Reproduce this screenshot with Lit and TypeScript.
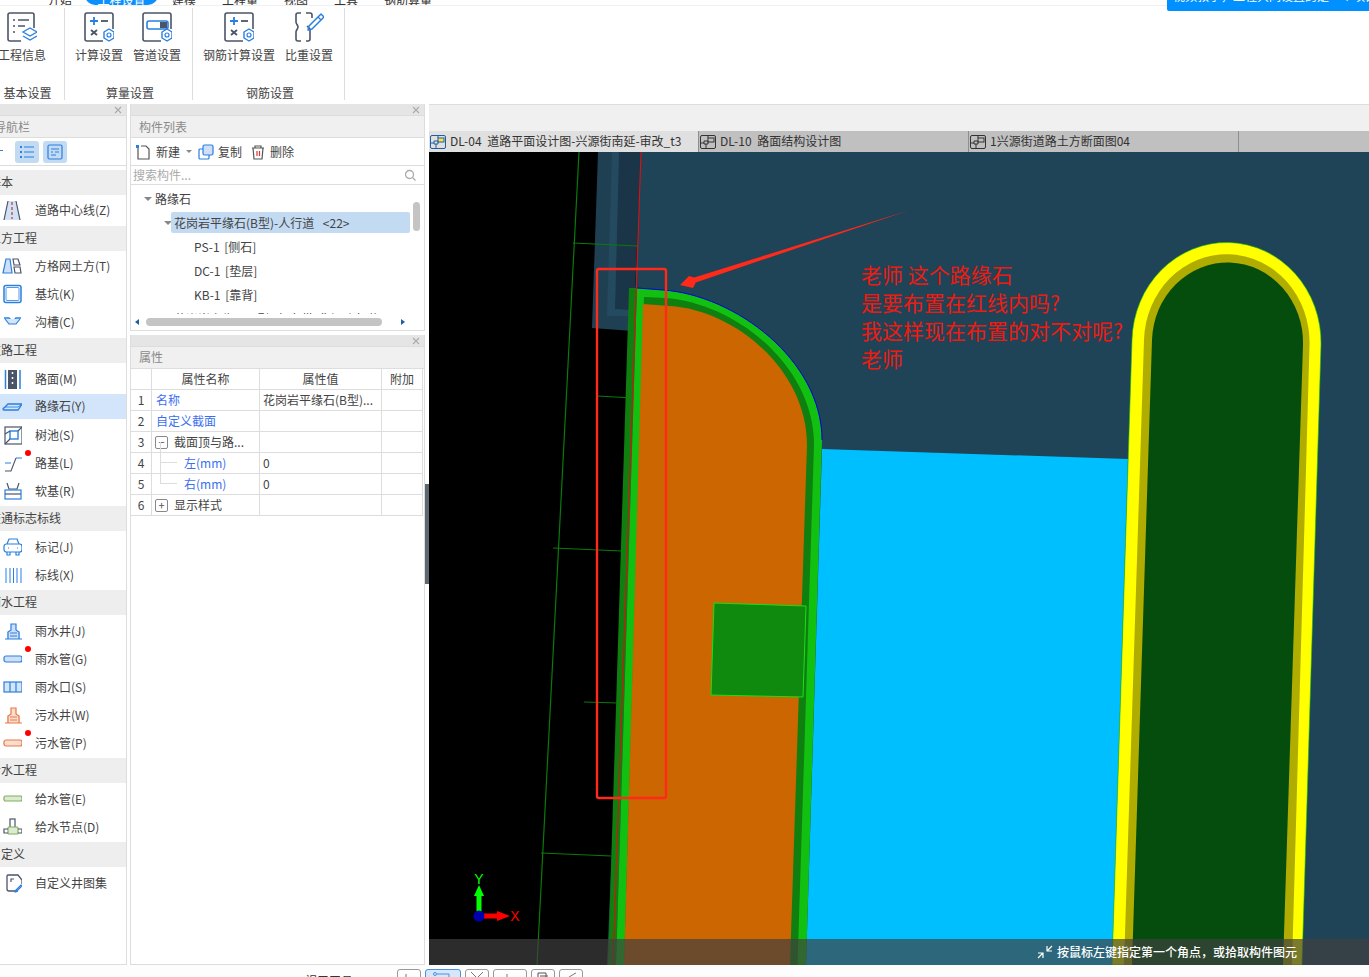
import { LitElement, html, svg, css } from 'lit';
import { customElement } from 'lit/decorators.js';

const GRAY = '#4b5568';
const BLUE = '#2a7fe0';
const ORANGE = '#e8784a';
const GREEN = '#7fae5f';

const icon = (size: number, body: unknown) => html`<svg class="ico" width=${size} height=${size} viewBox="0 0 ${size} ${size}" fill="none" stroke-width="1.2">${body}</svg>`;

const gear = (x: number, y: number) => svg`
  <path d="M${x} ${y - 6}l5 3v6l-5 3l-5-3v-6z" stroke=${BLUE} stroke-width="1.4" stroke-linejoin="round"/>
  <circle cx=${x} cy=${y} r="2" stroke=${BLUE} stroke-width="1.2"/>`;

const ribbonIcons: Record<string, unknown> = {
  info: svg`<path d="M14 29H3a2 2 0 0 1-2-2V3a2 2 0 0 1 2-2h22a2 2 0 0 1 2 2v13" stroke=${GRAY} stroke-width="1.6"/>
    <path d="M6 8h2M11 8h11M6 14h2M11 14h7M6 20h2" stroke=${GRAY} stroke-width="1.6"/>
    <path d="M23 16l7 4-7 4-7-4z" stroke=${BLUE} fill="#fff" stroke-width="1.3"/><path d="M16 24l7 4 7-4" stroke=${BLUE} stroke-width="1.3"/>`,
  calc: svg`<path d="M19 29H3a2 2 0 0 1-2-2V3a2 2 0 0 1 2-2h24a2 2 0 0 1 2 2v14" stroke=${GRAY} stroke-width="1.6"/>
    <path d="M6 9h8M10 5v8" stroke=${BLUE} stroke-width="1.8"/><path d="M17 9h7" stroke=${GRAY} stroke-width="1.8"/>
    <path d="M7 18l6 5M13 18l-6 5" stroke=${GRAY} stroke-width="1.8"/>${gear(25, 23)}`,
  pipe: svg`<path d="M19 29H3a2 2 0 0 1-2-2V3a2 2 0 0 1 2-2h24a2 2 0 0 1 2 2v14" stroke=${GRAY} stroke-width="1.6"/>
    <rect x="5" y="9" width="21" height="8" rx="2" stroke=${BLUE} stroke-width="1.6"/><rect x="18" y="10" width="7" height="6" fill=${GRAY}/>${gear(25, 23)}`,
  weight: svg`<path d="M7 1H4a2 2 0 0 0-2 2v7c0 2 2 3 2 5s-2 3-2 5v7a2 2 0 0 0 2 2h3" stroke=${GRAY} stroke-width="1.6"/>
    <path d="M12 1h4a2 2 0 0 1 2 2v3M13 14c1 1 3 2 3 4v9a2 2 0 0 1-2 2h-2" stroke=${GRAY} stroke-width="1.6"/>
    <path d="M27 2l3 3-12 12-4 1 1-4z" stroke=${BLUE} stroke-width="1.5" stroke-linejoin="round"/><path d="M24 5l3 3" stroke=${BLUE} stroke-width="1.3"/>`,
};

const navIcons: Record<string, unknown> = {
  road: svg`<path d="M6 1h8l4 19H2z" fill="#d2e2f6"/><path d="M6 1L2 20M14 1l4 19" stroke=${GRAY}/><path d="M10 2v17" stroke="#c0392b" stroke-dasharray="3 2"/>`,
  grid: svg`<path d="M4 3h4l2 14H1z" fill="#cfe0f6" stroke=${BLUE}/><path d="M11 3h5l2 6h-6zM12 11h6l1 6h-6z" stroke=${GRAY}/>`,
  pit: svg`<rect x="2" y="1.500" width="17" height="17" rx="2" stroke=${BLUE} stroke-width="1.500"/><rect x="4" y="3.500" width="13" height="13" rx="1" stroke=${BLUE} stroke-width=".8"/>`,
  trench: svg`<path d="M2 6h5l2 2h3l2-2h5" stroke=${BLUE} stroke-width="1.300"/><path d="M3 7l4 5h7l4-5" stroke=${BLUE} fill="#d5e5f8"/>`,
  pave: svg`<rect x="6" y="1" width="9" height="19" fill=${GRAY}/><path d="M10.500 3v15" stroke="#fff" stroke-width="1.500" stroke-dasharray="2 3"/><path d="M3.500 1v19M18 1v19" stroke=${BLUE} stroke-width="1.500"/>`,
  curb: svg`<path d="M6 7h14l-4 6H2a1 1 0 0 1 0-2z" stroke=${BLUE} stroke-width="1.300"/><path d="M3 10h13l4-3" stroke=${BLUE} stroke-width=".9"/>`,
  tree: svg`<rect x="3" y="2" width="17" height="17" stroke=${GRAY} stroke-width="1.200"/><rect x="8" y="6" width="8" height="8" stroke=${BLUE} stroke-width="1.400"/><path d="M3 19l5-5M20 2l-4 4M3 9l5-3" stroke=${GRAY}/>`,
  base: svg`<path d="M3 10h6M14 5h6" stroke=${BLUE}/><path d="M3 18h6l5-13" stroke=${GRAY} stroke-width="1.100"/>`,
  soft: svg`<path d="M5 2l2 6h8l2-6" stroke=${GRAY}/><rect x="3" y="9" width="16" height="9" stroke=${BLUE} stroke-width="1.200"/><path d="M3 13h16" stroke=${GRAY}/>`,
  mark: svg`<path d="M5 7l2-5h8l2 5" stroke=${BLUE} stroke-width="1.200"/><rect x="2" y="7" width="18" height="8" rx="2.500" stroke=${BLUE} stroke-width="1.200"/><path d="M5 15v3h3v-3M14 15v3h3v-3M6 11h1M15 11h1" stroke=${BLUE}/>`,
  lines: svg`<path d="M4 3v15M8 3v15M11.500 3v15M15 3v15M19 3v15" stroke=${BLUE} stroke-width="1"/>`,
  well: svg`<path d="M9 3h5v6l4 2v7H5v-7l4-2z" fill="#cfe0f6"/><path d="M3 18h17M6 18v-7l3-2V3h5v6l3 2v7M8 12h7M8 15h7" stroke=${BLUE}/>`,
  rainpipe: svg`<rect x="2" y="7" width="18" height="6" rx="2" fill="#cfe0f6" stroke=${BLUE} stroke-width="1.200"/>`,
  inlet: svg`<rect x="2" y="5" width="18" height="10" fill="#d5e5f8" stroke=${BLUE} stroke-width="1.200"/><path d="M8 5v10M14 5v10" stroke=${BLUE} stroke-width="1.200"/>`,
  sewer: svg`<path d="M9 3h5v6l4 2v7H5v-7l4-2z" fill="#fbdccd"/><path d="M3 18h17M6 18v-7l3-2V3h5v6l3 2v7M8 12h7M8 15h7" stroke=${ORANGE}/>`,
  sewerpipe: svg`<rect x="2" y="7" width="18" height="6" rx="2" fill="#fbdccd" stroke=${ORANGE} stroke-width="1.200"/>`,
  water: svg`<rect x="2" y="7" width="18" height="5" rx="1.500" fill="#dcebd0" stroke=${GREEN} stroke-width="1.200"/>`,
  node: svg`<rect x="8" y="2" width="5" height="9" stroke=${GRAY}/><rect x="6" y="10" width="10" height="7" rx="1" fill="#dcebd0" stroke=${GREEN}/><path d="M6 12H2v4h4M16 12h4v4h-4" stroke=${GRAY}/>`,
  custom: svg`<path d="M16 18H7a2 2 0 0 1-2-2V3a1 1 0 0 1 1-1h10l4 5v4" stroke=${GRAY} stroke-width="1.300"/><path d="M9 9V6h3" stroke=${GRAY}/><path d="M19 12l1 1-6 6h-1v-1z" stroke=${BLUE}/>`,
};

const sections = [
  { title: '基本', items: [{ label: '道路中心线(Z)', icon: 'road' }] },
  { title: '土方工程', items: [{ label: '方格网土方(T)', icon: 'grid' }, { label: '基坑(K)', icon: 'pit' }, { label: '沟槽(C)', icon: 'trench' }] },
  { title: '道路工程', items: [{ label: '路面(M)', icon: 'pave' }, { label: '路缘石(Y)', icon: 'curb', active: true }, { label: '树池(S)', icon: 'tree' }, { label: '路基(L)', icon: 'base', dot: true }, { label: '软基(R)', icon: 'soft' }] },
  { title: '交通标志标线', items: [{ label: '标记(J)', icon: 'mark' }, { label: '标线(X)', icon: 'lines' }] },
  { title: '雨水工程', items: [{ label: '雨水井(J)', icon: 'well' }, { label: '雨水管(G)', icon: 'rainpipe', dot: true }, { label: '雨水口(S)', icon: 'inlet' }, { label: '污水井(W)', icon: 'sewer' }, { label: '污水管(P)', icon: 'sewerpipe', dot: true }] },
  { title: '给水工程', items: [{ label: '给水管(E)', icon: 'water' }, { label: '给水节点(D)', icon: 'node' }] },
  { title: '自定义', items: [{ label: '自定义井图集', icon: 'custom' }] },
];

const tabIcon = (active: boolean) => html`<svg class="ico" width="16" height="16" viewBox="0 0 16 16" fill="none" stroke=${active ? '#1e5f9e' : '#333'} stroke-width="1">
  <rect x=".5" y="1.500" width="15" height="13" rx="1.500"/>
  <rect x="8" y="4" width="6" height="4" fill=${active ? '#ffe04a' : 'none'}/><path d="M8 4V1.500M1 9h3M4 7h4v3H4zM6 10v4.500"/></svg>`;

const closeX = html`<svg class="ico" width="8" height="8" viewBox="0 0 8 8" stroke="#aaa" stroke-width="1.100"><path d="M1 1l6 6M7 1l-6 6"/></svg>`;

const canvasArt = svg`
  <rect x="429" y="152" width="940" height="813" fill="#1f4357"/>
  <polygon points="429,152 641,152 607,965 429,965" fill="#000"/>
  <polygon points="598,152 641,152 633,331 592,328" fill="#1f4052"/>
  <polygon points="619,152 641,152 633,331 628,310 615,309" fill="#1a3547"/>
  <polygon points="612,152 619,152 615,309 630,310 629,316 607,316" fill="#234a5f"/>
  <path d="M579 152L537 965" stroke="#0a7a0a" stroke-width="1.200"/>
  <path d="M573 243L638 246M597 396L633 398M553 548L622 551M584 702L618 703M541 853L611 856" stroke="#0a7a0a"/>

  <polygon points="822,449 1128,459 1112,965 806,965" fill="#00bfff"/>

  <polygon points="629,288 637,288 616,965 608,965" fill="#0f7f0f"/>
  <path d="M637 288L663 290C735 295 822 360 822 440L806 965H616Z" fill="#12c012"/>
  <path d="M644 297L665 298C735 303 814 365 814 445L797.500 965H624Z" fill="#0f7f0f"/>
  <path d="M643 304L670 306C735 310 807 370 807 445L790 965H624Z" fill="#cc6600"/>
  <path d="M637 288L663 290C735 295 822 360 822 440" fill="none" stroke="#0000e0"/>
  <path d="M641 152L613 965" stroke="#e01010" stroke-width="1.100"/>
  <polygon points="714,603 806,606 803,697 711,695" fill="#0f8a0f" stroke="#17e017"/>

  <path d="M1112 965L1132 340A94.500 100 0 0 1 1321 345L1302 965Z" fill="#ffff00" stroke="#11c011" stroke-width=".6"/>
  <path d="M1124 965L1144 340A82.500 88 0 0 1 1309.500 345L1292 965Z" fill="#b0ac00"/>
  <path d="M1132 965L1152 340A75.500 80 0 0 1 1303 345L1283 965Z" fill="#054d0d"/>

  <rect x="597" y="269" width="69" height="529" rx="2" fill="none" stroke="#ff2a1a" stroke-width="2.400"/>
  <polygon points="910,210 695.800,282.400 693,288 680,285 689,276 694.200,277.600" fill="#ff2a1a"/>

  <path d="M479 912V892" stroke="#00ff00" stroke-width="5"/><polygon points="479,885 484,896 474,896" fill="#00ff00"/>
  <path d="M482 916H498" stroke="#ff0000" stroke-width="5"/><polygon points="510,916 497,911 497,921" fill="#ff0000"/>
  <circle cx="479" cy="916" r="5.500" fill="#0000b0"/>
  <text x="479" y="884" class="axis-y">Y</text>
  <text x="515" y="921" class="axis-x">X</text>

  <rect x="429" y="939" width="940" height="26" fill="rgba(64,64,64,.69)"/>`;

@customElement('app-root')
export class AppRoot extends LitElement {
  static styles = css`
    :host {
      display: block;
      position: relative;
      width: 1369px;
      height: 977px;
      overflow: hidden;
      background: #fff;
      font: 12px/1.2 "Noto Sans CJK SC", "Liberation Sans", sans-serif;
      color: #444;
    }
    .ico { display: block; flex: none; }

    /* top tabs, only the bottom edge is visible */
    .menu {
      display: flex;
      height: 5px;
      overflow: hidden;
      padding-left: 48px;
      border-bottom: 1px solid #f0f0f0;
      font-size: 12px;
    }
    .menu span { line-height: 10px; margin-top: -5px; margin-right: 26px; white-space: nowrap; color: #333; }
    .menu span:first-child { margin-right: 15px; }
    .menu .on {
      width: 73px;
      margin: -5px 14px 0 -2px;
      text-align: center;
      background: #0a90ff;
      color: #fff;
      border-radius: 0 0 14px 14px;
    }
    .notice {
      position: absolute;
      left: 1167px;
      top: 0;
      width: 202px;
      height: 11px;
      background: #0090ff;
      border-bottom-left-radius: 2px;
      overflow: hidden;
      color: #fff;
      font-size: 12px;
      line-height: 4px;
      padding-left: 6px;
      box-sizing: border-box;
      white-space: nowrap;
    }
    .notice span { display: block; margin-top: -6px; }

    .ribbon { display: flex; height: 98px; }
    .group {
      display: flex;
      flex-direction: column;
      margin: 2px 0 4px;
      border-right: 1px solid #ddd;
    }
    .group.first { margin-left: -2px; width: 67px; box-sizing: border-box; }
    .group.first .group-label { padding-right: 10px; }
    .group-items { display: flex; gap: 10px; padding: 0 11px 0 10px; flex: 1; }
    .group.first .group-items { padding: 0; }
    .tool { display: flex; flex-direction: column; align-items: center; padding-top: 4px; gap: 4px; color: #444; white-space: nowrap; }
    .tool span { line-height: 18px; }
    .group-label { text-align: center; padding-left: 3px; line-height: 18px; color: #444; height: 16px; margin-top: -1px; }

    .main { display: flex; height: 861px; }
    .nav {
      width: 127px;
      box-sizing: border-box;
      border-right: 1px solid #ddd;
      border-bottom: 1px solid #ddd;
      overflow: hidden;
      flex: none;
    }
    .strip {
      height: 11px;
      background: #e5e5e5;
      display: flex;
      justify-content: flex-end;
      align-items: center;
      padding-right: 4px;
      border-bottom: 1px solid #ddd;
    }
    .head {
      height: 21px;
      line-height: 21px;
      background: #f0f0f0;
      color: #8a8a8a;
      padding-left: 8px;
      border-bottom: 1px solid #ddd;
    }
    .prop-card .head { line-height: 19px; }
    .nav .head { text-indent: -6px; padding: 0; }
    .nav-tools {
      height: 27px;
      display: flex;
      gap: 4px;
      align-items: center;
      padding-left: 15px;
      border-bottom: 1px solid #ddd;
      margin-bottom: 4px;
      position: relative;
    }
    .nav-tools::before { content: ""; position: absolute; left: 0; top: 12px; width: 3px; height: 1px; background: #2a7fe0; }
    .nav-btn { width: 24px; height: 22px; background: #c2daf2; border-radius: 3px; display: flex; align-items: center; justify-content: center; }
    .sec-title {
      height: 25px;
      line-height: 23px;
      background: #eee;
      margin-left: -11px;
      padding-left: 0;
      color: #444;
      white-space: nowrap;
    }
    .sec-body { padding: 1px 0 2px; }
    .sec-body.low { padding: 2px 0 1px; }
    .row { height: 28px; display: flex; align-items: center; position: relative; padding-left: 2px; gap: 13px; white-space: nowrap; }
    .row.active { background: #d3e5fb; height: 25px; margin: 1px 0 2px; }
    .dot { position: absolute; left: 25px; top: 1px; width: 6px; height: 6px; background: #f00; border-radius: 50%; }

    .gap { width: 3px; flex: none; }
    .mid { width: 295px; flex: none; display: flex; flex-direction: column; gap: 4px; }
    .card { border: 1px solid #ddd; border-top: 0; box-sizing: border-box; display: flex; flex-direction: column; overflow: hidden; position: relative; }
    .list-card { height: 227px; }
    .prop-card { height: 630px; }
    .list-tools { height: 27px; display: flex; align-items: center; padding-left: 4px; gap: 4px; border-bottom: 1px solid #ddd; flex: none; }
    .list-tools span { margin: 2px 4px 0 0; }
    .list-tools span:first-of-type { margin-left: 1px; }
    .caret { width: 0; height: 0; border: 3px solid transparent; border-top: 3px solid #888; border-bottom: 0; margin: 0 2px 0 -2px; }
    .search { height: 18px; line-height: 18px; display: flex; justify-content: space-between; align-items: center; color: #aaa; padding: 0 8px 0 2px; border-bottom: 1px solid #ddd; flex: none; }
    .tree { flex: 1; overflow: hidden; padding-top: 2px; position: relative; }
    .node { height: 24px; display: flex; align-items: center; white-space: nowrap; color: #444; word-spacing: 2px; }
    .tri { width: 0; height: 0; border: 4px solid transparent; border-top: 4px solid #888; border-bottom: 0; margin-right: 3px; }
    .node.l0 { padding-left: 13px; }
    .node.l1 { padding-left: 33px; }
    .node.l2 { padding-left: 63px; }
    .node.cut { padding-left: 43px; }
    .sel { background: #c2daf2; border-radius: 2px; width: 239px; height: 21px; line-height: 21px; margin: 0 0 2px -4px; padding-left: 3px; box-sizing: border-box; word-spacing: 6px; }
    .vthumb { position: absolute; left: 282px; top: 17px; width: 7px; height: 29px; background: #c4c4c4; border-radius: 4px; }
    .hbar { position: absolute; left: 0; right: 0; bottom: 0; height: 16px; background: #fff; display: flex; align-items: center; }
    .hthumb { position: absolute; left: 15px; top: 4px; width: 236px; height: 8px; background: #c4c4c4; border-radius: 4px; }
    .arr { position: absolute; top: 5px; width: 0; height: 0; border: 3.500px solid transparent; }
    .arr.l { left: 4px; border-right: 4px solid #1e5f9e; border-left: 0; }
    .arr.r { left: 270px; border-left: 4px solid #1e5f9e; border-right: 0; }

    .table { display: grid; grid-template-columns: 21px 108px 122px 41px; grid-auto-rows: 21px; flex: none; }
    .c { box-sizing: border-box; border-right: 1px solid #ddd; border-bottom: 1px solid #ddd; padding-left: 3px; line-height: 20px; white-space: nowrap; overflow: hidden; color: #444; position: relative; display: flex; align-items: center; }
    .c.h { justify-content: center; padding: 0; }
    .c.n { justify-content: center; padding: 0; }
    .link { color: #3a6ff0; padding-left: 4px; }
    .c.i1 { padding-left: 22px; overflow: visible; }
    .c.i2 { padding-left: 32px; overflow: visible; }
    .box { position: absolute; left: 3px; top: 4px; width: 11px; height: 11px; border: 1px solid #888; border-radius: 2px; text-align: center; line-height: 10px; color: #555; font-size: 11px; }
    .conn { position: absolute; left: 8px; top: -11px; width: 17px; height: 21px; border-left: 1px solid #ddd; border-bottom: 1px solid #ddd; box-sizing: border-box; }

    .right { flex: 1; display: flex; flex-direction: column; min-width: 0; }
    .right-strip { height: 26px; background: #f0f0f0; border-top: 1px solid #ddd; flex: none; }
    .tabs { height: 21px; display: flex; background: #c0c0c0; flex: none; }
    .tab { width: 270px; box-sizing: border-box; display: flex; align-items: center; gap: 4px; padding-left: 1px; border-right: 1px solid #8a8f95; color: #333; white-space: nowrap; word-spacing: 3px; }
    .tab.on { background: #e0e0e0; border-right-color: #8a8f95; }
    .canvas { position: relative; flex: 1; overflow: hidden; }
    .canvas > svg { display: block; }
    .axis-y { fill: #00ff00; font-size: 14px; text-anchor: middle; font-family: "Liberation Sans", sans-serif; }
    .axis-x { fill: #ff0000; font-size: 14px; text-anchor: middle; font-family: "Liberation Sans", sans-serif; }
    .note {
      position: absolute;
      left: 432px;
      top: 108px;
      font-size: 21px;
      line-height: 28px;
      color: #f01a10;
      white-space: pre;
    }
    .status {
      position: absolute;
      right: 72px;
      bottom: 0;
      height: 26px;
      display: flex;
      align-items: center;
      gap: 4px;
      color: #fff;
      font-weight: 500;
    }
    .handle { position: absolute; left: 425px; top: 484px; width: 4px; height: 100px; background: #5f6770; }

    .foot { height: 12px; display: flex; padding: 4px 0 0 397px; gap: 4px; box-sizing: border-box; overflow: hidden; position: relative; background: #fdfdfd; }
    .foot i { display: block; height: 16px; border: 1px solid #999; border-radius: 3px; box-sizing: border-box; }
    .foot i.on { background: #d6e6fb; border-color: #4a90e2; }
    .foot svg { display: block; margin: 2px auto 0; }
    .foot-text { position: absolute; left: 305px; top: 9px; font-size: 12px; line-height: 14px; color: #333; }
  `;

  render() {
    return html`
      <div class="menu">
        <span>开始</span><span class="on">工程设置</span><span>建模</span><span>工程量</span><span>视图</span><span>工具</span><span>钢筋算量</span>
      </div>
      <div class="notice"><span>视频教学，工程共同设置的是一个项目文件说明</span></div>

      <div class="ribbon">
        <div class="group first">
          <div class="group-items">
            <div class="tool">${icon(30, ribbonIcons.info)}<span>工程信息</span></div>
          </div>
          <div class="group-label">基本设置</div>
        </div>
        <div class="group">
          <div class="group-items">
            <div class="tool">${icon(30, ribbonIcons.calc)}<span>计算设置</span></div>
            <div class="tool">${icon(30, ribbonIcons.pipe)}<span>管道设置</span></div>
          </div>
          <div class="group-label">算量设置</div>
        </div>
        <div class="group">
          <div class="group-items">
            <div class="tool">${icon(30, ribbonIcons.calc)}<span>钢筋计算设置</span></div>
            <div class="tool">${icon(30, ribbonIcons.weight)}<span>比重设置</span></div>
          </div>
          <div class="group-label">钢筋设置</div>
        </div>
      </div>

      <div class="main">
        <div class="nav">
          <div class="strip">${closeX}</div>
          <div class="head">导航栏</div>
          <div class="nav-tools">
            <div class="nav-btn">${icon(16, svg`<path d="M5 3h10M5 8h10M5 13h10" stroke=${BLUE}/><path d="M1 3h2M1 8h2M1 13h2" stroke=${BLUE} stroke-width="2"/>`)}</div>
            <div class="nav-btn">${icon(16, svg`<rect x="1" y="1" width="14" height="14" rx="1.500" stroke=${BLUE}/><path d="M4 5h8M4 8h2M8 8h4M4 11h5" stroke=${BLUE}/>`)}</div>
          </div>
          ${sections.map((s, i) => html`
            <div class="sec-title">${s.title}</div>
            <div class="sec-body ${i >= 2 ? 'low' : ''}">
              ${s.items.map((it: any) => html`
                <div class="row ${it.active ? 'active' : ''}">
                  ${icon(20, navIcons[it.icon])}
                  <span>${it.label}</span>
                  ${it.dot ? html`<div class="dot"></div>` : ''}
                </div>`)}
            </div>`)}
        </div>
        <div class="gap"></div>

        <div class="mid">
          <div class="card list-card">
            <div class="strip">${closeX}</div>
            <div class="head">构件列表</div>
            <div class="list-tools">
              ${icon(16, svg`<path d="M3 4v11h11V5l-3-3H6" stroke="#555"/><rect x="1" y="1" width="3" height="3" fill=${BLUE}/>`)}
              <span>新建</span><div class="caret"></div>
              ${icon(16, svg`<rect x="5" y="1" width="10" height="10" rx="1.500" fill="#cfe0f6" stroke=${BLUE}/><path d="M5 5H2a1 1 0 0 0-1 1v8a1 1 0 0 0 1 1h8a1 1 0 0 0 1-1v-3" stroke=${BLUE}/>`)}
              <span>复制</span>
              ${icon(16, svg`<path d="M2 4h12M5 4V2h6v2M3 4l1 11h8l1-11" stroke="#555"/><path d="M7 7v5M9.500 7v5" stroke="#d33"/>`)}
              <span>删除</span>
            </div>
            <div class="search">
              <span>搜索构件...</span>
              ${icon(12, svg`<circle cx="5.500" cy="5.500" r="4" stroke="#aaa" stroke-width="1.300"/><path d="M8.500 8.500l3 3" stroke="#aaa" stroke-width="1.300"/>`)}
            </div>
            <div class="tree">
              <div class="node l0"><div class="tri"></div>路缘石</div>
              <div class="node l1"><div class="tri"></div><div class="sel">花岗岩平缘石(B型)-人行道 &lt;22&gt;</div></div>
              <div class="node l2">PS-1 [侧石]</div>
              <div class="node l2">DC-1 [垫层]</div>
              <div class="node l2">KB-1 [靠背]</div>
              <div class="node cut">花岗岩立缘石(A型)-行车带(非机动车道)</div>
              <div class="vthumb"></div>
              <div class="hbar"><div class="arr l"></div><div class="hthumb"></div><div class="arr r"></div></div>
            </div>
          </div>

          <div class="card prop-card">
            <div class="strip"> ${closeX}</div>
            <div class="head">属性</div>
            <div class="table">
              <div class="c h"></div><div class="c h">属性名称</div><div class="c h">属性值</div><div class="c h">附加</div>
              <div class="c n">1</div><div class="c link">名称</div><div class="c">花岗岩平缘石(B型)...</div><div class="c"></div>
              <div class="c n">2</div><div class="c link">自定义截面</div><div class="c"></div><div class="c"></div>
              <div class="c n">3</div><div class="c i1"><div class="box">−</div>截面顶与路...</div><div class="c"></div><div class="c"></div>
              <div class="c n">4</div><div class="c i2 link"><div class="conn"></div>左(mm)</div><div class="c">0</div><div class="c"></div>
              <div class="c n">5</div><div class="c i2 link"><div class="conn"></div>右(mm)</div><div class="c">0</div><div class="c"></div>
              <div class="c n">6</div><div class="c i1"><div class="box">+</div>显示样式</div><div class="c"></div><div class="c"></div>
            </div>
          </div>
        </div>
        <div class="handle"></div>
        <div class="gap" style="width:4px"></div>

        <div class="right">
          <div class="right-strip"></div>
          <div class="tabs">
            <div class="tab on">${tabIcon(true)}DL-04 道路平面设计图-兴源街南延-审改_t3</div>
            <div class="tab">${tabIcon(false)}DL-10 路面结构设计图</div>
            <div class="tab">${tabIcon(false)}1兴源街道路土方断面图04</div>
          </div>
          <div class="canvas">
            <svg width="940" height="813" viewBox="429 152 940 813">${canvasArt}</svg>
            <div class="note">老师 这个路缘石
是要布置在红线内吗?
我这样现在布置的对不对呢?
老师</div>
            <div class="status">
              ${icon(16, svg`<path d="M10 2v5h5M10 7l5-5M6 14V9H1M6 9l-5 5" stroke="#fff"/>`)}
              <span>按鼠标左键指定第一个角点，或拾取构件图元</span>
            </div>
          </div>
        </div>
      </div>

      <div class="foot">
        <div class="foot-text">视口工具</div>
        <i style="width:24px"><svg width="12" height="8" stroke="#777" fill="none"><path d="M3 2v6"/></svg></i>
        <i class="on" style="width:36px"><svg width="22" height="8" stroke="#4a90e2" fill="none"><circle cx="3" cy="2" r="1.500"/><path d="M5 2h12v6"/></svg></i>
        <i style="width:24px"><svg width="14" height="8" stroke="#777" fill="none"><path d="M1 0l6 6 6-6"/></svg></i>
        <i style="width:34px"><svg width="12" height="8" stroke="#777" fill="none"><path d="M3 2v6"/></svg></i>
        <i style="width:24px"><svg width="12" height="8" stroke="#555" fill="none"><path d="M1 1h8v7M1 1v7M3 4h8"/></svg></i>
        <i style="width:24px"><svg width="14" height="8" stroke="#777" fill="none"><path d="M2 7l8-5 2-1"/></svg></i>
      </div>
    `;
  }
}
